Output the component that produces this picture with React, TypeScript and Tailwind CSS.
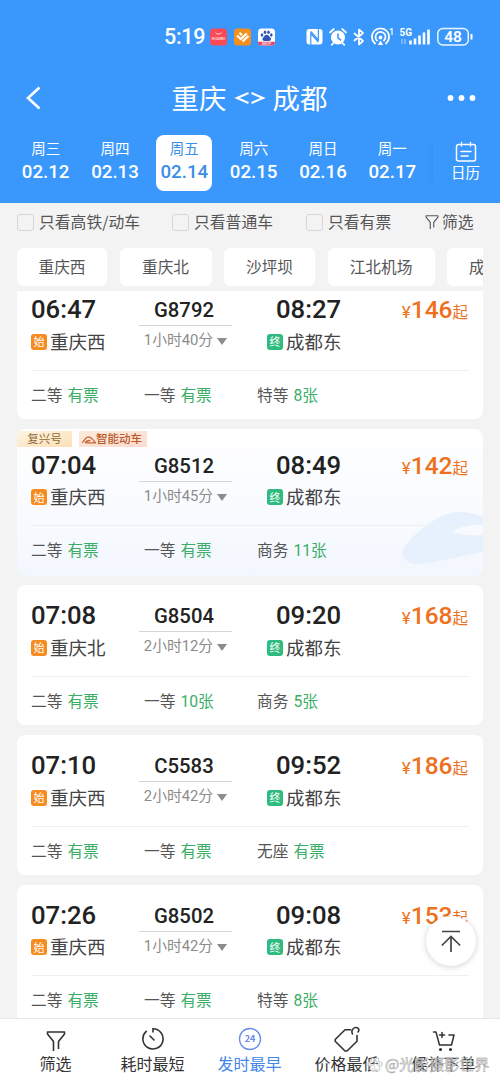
import type { ReactNode } from "react"

type Train = {
  no: string
  depart: string
  arrive: string
  from: string
  to: string
  duration: string
  price: string
  seats: [string, string][]
  smart?: boolean
}

const days = [
  { week: "周三", date: "02.12" },
  { week: "周四", date: "02.13" },
  { week: "周五", date: "02.14", active: true },
  { week: "周六", date: "02.15" },
  { week: "周日", date: "02.16" },
  { week: "周一", date: "02.17" },
]

const stations = [
  { name: "重庆西", width: "w-[90px]" },
  { name: "重庆北", width: "w-[92px]" },
  { name: "沙坪坝", width: "w-[91px]" },
  { name: "江北机场", width: "w-[107px]" },
  { name: "成都东", width: "w-[91px]" },
]

const trains: Train[] = [
  {
    no: "G8792",
    depart: "06:47",
    arrive: "08:27",
    from: "重庆西",
    to: "成都东",
    duration: "1小时40分",
    price: "146",
    seats: [["二等", "有票"], ["一等", "有票"], ["特等", "8张"]],
  },
  {
    no: "G8512",
    depart: "07:04",
    arrive: "08:49",
    from: "重庆西",
    to: "成都东",
    duration: "1小时45分",
    price: "142",
    seats: [["二等", "有票"], ["一等", "有票"], ["商务", "11张"]],
    smart: true,
  },
  {
    no: "G8504",
    depart: "07:08",
    arrive: "09:20",
    from: "重庆北",
    to: "成都东",
    duration: "2小时12分",
    price: "168",
    seats: [["二等", "有票"], ["一等", "10张"], ["商务", "5张"]],
  },
  {
    no: "C5583",
    depart: "07:10",
    arrive: "09:52",
    from: "重庆西",
    to: "成都东",
    duration: "2小时42分",
    price: "186",
    seats: [["二等", "有票"], ["一等", "有票"], ["无座", "有票"]],
  },
  {
    no: "G8502",
    depart: "07:26",
    arrive: "09:08",
    from: "重庆西",
    to: "成都东",
    duration: "1小时42分",
    price: "153",
    seats: [["二等", "有票"], ["一等", "有票"], ["特等", "8张"]],
  },
]

function StatusBar() {
  return (
    <div className="flex h-[74px] items-center pl-[164px] font-[Roboto,sans-serif] text-white">
      <span className="w-[45px] text-[21.500px] leading-none font-medium tracking-[-0.300px]">5:19</span>
      <svg className="h-[18px] w-[66px]" viewBox="0 0 66 18">
        <rect x="1" y="0.5" width="17" height="17" rx="3.5" fill="#fa4a55" />
        <path d="M6.5 4.5a3.2 2.4 0 0 0 6 0" fill="none" stroke="#fff" strokeWidth="0.8" />
        <text x="9.5" y="12" fontSize="3.6" fill="#fff" textAnchor="middle">HUAWEI</text>
        <rect x="25" y="0.5" width="17" height="17" rx="3.5" fill="#f5901f" />
        <path d="M28 7.500l3.800 3.500 6-5.500M30.500 4.800l2.500 2.400M33.500 13.500l6-5.500" fill="none" stroke="#fff" strokeWidth="2.200" />
        <rect x="49" y="0.5" width="17" height="17" rx="3.5" fill="#fff" />
        <g fill="#3155b5">
          <ellipse cx="53" cy="7" rx="1.3" ry="1.8" />
          <ellipse cx="56" cy="4.2" rx="1.3" ry="1.8" />
          <ellipse cx="59.5" cy="4.2" rx="1.3" ry="1.8" />
          <ellipse cx="62.3" cy="7" rx="1.3" ry="1.8" />
          <path d="M57.7 6.8c2 0 2.5 1.8 3.6 2.8 1.6 1.6.4 3.6-1.5 3.4h-4.2c-2 .2-3-1.8-1.4-3.4 1-1 1.6-2.8 3.5-2.8z" />
        </g>
        <path d="M49 13.8h17v.4a3.4 3.4 0 0 1-3.4 3.3H52.4a3.4 3.4 0 0 1-3.4-3.3z" fill="#e24668" />
        <text x="57.5" y="16.8" fontSize="3.4" fill="#fff" textAnchor="middle">88VIP</text>
      </svg>
      <svg className="ml-[31px] h-[24px] w-[168px]" viewBox="306 25 168 24" fill="none" stroke="#fff">
        {/* nfc */}
        <rect x="306.500" y="29" width="16" height="15.600" rx="3" fill="#fff" stroke="none" />
        <path d="M310.800 45V33.500l7.600 8.500M318.400 28.500V40l-7.600-8.500" stroke="#3a97fc" strokeWidth="1.200" />
        {/* alarm */}
        <circle cx="338" cy="37.5" r="7" fill="#fff" stroke="none" />
        <path d="M338 33.5v4.3l3 2.5" stroke="#3a97fc" strokeWidth="1.6" />
        <path d="M330 32.5l3.8-3.5M346 32.5l-3.8-3.5M333.5 43l-1.8 1.8M342.5 43l1.8 1.8" strokeWidth="1.7" strokeLinecap="round" />
        {/* bluetooth */}
        <path d="M354 33l9 8-4 3.5v-15l4 3.5-9 8" strokeWidth="1.7" strokeLinejoin="round" />
        {/* hotspot */}
        <path d="M375 43.5a8.6 8.6 0 1 1 11 0M377 40.5a5 5 0 1 1 7 0" strokeWidth="1.8" strokeLinecap="round" />
        <circle cx="380.5" cy="37.5" r="1.9" fill="#fff" stroke="none" />
        <path d="M377.8 45l2.7-4.5 2.7 4.5z" fill="#fff" stroke="none" />
        <text x="389" y="34.500" fontSize="9" fontWeight="500" fill="#fff" stroke="none">1</text>
        <text x="399.5" y="36" fontSize="10" fontWeight="700" fill="#fff" stroke="none">5G</text>
        <path d="M402 39v5M405 39v5" strokeOpacity="0.5" strokeWidth="1.2" />
        <path d="M410.5 44.5v-4M415 44.5v-6M419.5 44.5v-9M424 44.5v-12M428.5 44.5v-15" strokeWidth="2.6" />
        {/* battery */}
        <rect x="437.8" y="28.5" width="30.5" height="16.5" rx="5" strokeWidth="1.5" strokeOpacity="0.9" />
        <path d="M471.5 34v5.5" strokeWidth="2" />
        <text x="453" y="42.2" fontSize="15.5" fontWeight="600" textAnchor="middle" fill="#fff" stroke="none">48</text>
      </svg>
    </div>
  )
}

function Header() {
  return (
    <header className="h-[203px] bg-[#3a97fc] text-white">
      <StatusBar />
      <div className="flex h-12 items-center justify-between px-6">
        <svg className="h-6 w-7" viewBox="0 0 28 24" fill="none" stroke="#fff" strokeWidth="2.6">
          <path d="M15.5 1.5L4 12l11.5 10.5" />
        </svg>
        <h1 className="flex items-center gap-[7px] text-[27.5px]">
          重庆
          <svg className="h-4 w-8" viewBox="0 0 32 16" fill="none" stroke="#fff" strokeWidth="2.1">
            <path d="M14.5 3L3 8l11.5 5M17.5 3L29 8l-11.5 5" />
          </svg>
          成都
        </h1>
        <svg className="h-2 w-[29px]" viewBox="0 0 29 8" fill="#fff">
          <circle cx="3.5" cy="4" r="2.9" />
          <circle cx="14.5" cy="4" r="2.9" />
          <circle cx="25.5" cy="4" r="2.9" />
        </svg>
      </div>
      <div className="flex h-[81px] items-center pl-[11px]">
        <div className="flex w-[416px]">
          {days.map((day) => (
            <div key={day.date} className="flex flex-1 justify-center">
              <div
                className={
                  day.active
                    ? "flex h-14 w-14 flex-col items-center rounded-lg bg-white pt-[4px] text-[#3b8ee6]"
                    : "flex h-14 w-14 flex-col items-center pt-[4px]"
                }
              >
                <span className="text-[14.5px] leading-[18px]">{day.week}</span>
                <span className="mt-[3px] font-[Roboto,sans-serif] text-[18.7px] leading-6 font-medium">{day.date}</span>
              </div>
            </div>
          ))}
        </div>
        <div className="h-10 w-[6px] bg-linear-to-r from-[#3a97fc] to-[#3692f6]" />
        <div className="-mt-[4px] ml-[18px] flex flex-col items-center text-[14.5px] leading-[18px]">
          <svg className="h-[22px] w-[22px]" viewBox="0 0 22 22" fill="none" stroke="#fff" strokeWidth="1.5" strokeLinecap="round">
            <path d="M5 3.5H3.5a2 2 0 0 0-2 2V18a2 2 0 0 0 2 2h15a2 2 0 0 0 2-2V5.5a2 2 0 0 0-2-2H17M8 3.5h6M6.5 1.5v3.5M15.5 1.5v3.5M6 10.5h10M6 15h7" />
          </svg>
          日历
        </div>
      </div>
    </header>
  )
}

function FunnelIcon({ className }: { className: string }) {
  return (
    <svg className={className} viewBox="0 0 20 22" fill="none" stroke="currentColor" strokeWidth="1.6" strokeLinejoin="round">
      <path d="M7.5 21V11.5L1.5 4V2h17v2l-6 7.5V19" />
    </svg>
  )
}

function Check({ label, className }: { label: string; className: string }) {
  return (
    <label className={`flex items-center gap-[5px] ${className}`}>
      <span className="h-[17px] w-[17px] rounded-[3px] border border-[#d6d6d6]" />
      {label}
    </label>
  )
}

function Tags() {
  return (
    <div className="absolute top-[2px] left-0 flex h-[16px] gap-[7px] text-[11.5px] leading-[15px]">
      <span className="w-[55px] bg-linear-to-br from-[#fdf4e4] to-[#fddfb4] text-center text-[#8d6a35]">复兴号</span>
      <span className="flex w-[68px] items-center bg-linear-to-br from-[#fdeadb] to-[#fcdccf] pl-[3px] font-medium text-[#b95a2b]">
        <svg className="mt-[3px] h-[8px] w-[14px] shrink-0" viewBox="0 0 14 8" fill="none" stroke="#c8622f" strokeWidth="1.2">
          <path d="M0 6.8c2-1 2-3.5 5-5.5 3.5-1 5 1 8.5 5.5H4c-1.5 0 0-2.5 4.5-2.5" />
        </svg>
        智能动车
      </span>
    </div>
  )
}

function Station({ name, badge, color }: { name: string; badge: string; color: string }) {
  return (
    <div className="flex h-[33px] items-center gap-[3px] text-[18.5px] text-[#444]">
      <span className={`flex h-4 w-4 items-center justify-center rounded-[3px] text-[11px] leading-none text-white ${color}`}>
        {badge}
      </span>
      {name}
    </div>
  )
}

function Time({ value, className }: { value: string; className?: string }) {
  return (
    <div className={`h-[32px] font-[Roboto,sans-serif] text-[25.700px] leading-[33px] font-medium text-[#222] ${className ?? ""}`}>
      {value}
    </div>
  )
}

function TrainCard({ train }: { train: Train }) {
  return (
    <article
      className={
        train.smart
          ? "relative h-[147px] shrink-0 overflow-hidden rounded-lg bg-linear-to-b from-white to-[#f3f7fe] px-[14px] pt-[20px]"
          : "relative h-[140px] shrink-0 rounded-lg bg-white px-[14px] pt-[14px]"
      }
    >
      {train.smart && (
        <>
          <Tags />
          <svg className="absolute right-0 bottom-[12px] h-[54px] w-[82px]" viewBox="0 0 82 54" fill="#e7f0fd">
            <path d="M1 42C4 34 13 25 22 18 33 9 46 2 58 2c9 0 17 2 24 5v8c-12-1-24 2-31 7 8 3 20 4 31 3v17c-14 3-30 6-45 9-9 2-16 4-25 3C7 53 0 46 1 42z" />
          </svg>
        </>
      )}
      <div className="relative flex h-[77.500px] border-b border-[#eeeff1]">
        <div className="w-[108px]">
          <Time value={train.depart} />
          <Station name={train.from} badge="始" color="bg-[#f68b1f]" />
        </div>
        <div className="flex w-[93px] flex-col items-center">
          <div className="h-[33px] w-full border-b border-[#d5d5d5] pt-px pr-[3px] text-center font-[Roboto,sans-serif] text-[20.3px] leading-[32px] font-medium text-[#222]">
            {train.no}
          </div>
          <div className="flex items-center gap-[4px] font-[Roboto,'Noto_Sans_CJK_SC',sans-serif] text-[14.8px] leading-[29px] text-[#8c8c8c]">
            {train.duration}
            <span className="mt-[2px] border-x-[5px] border-t-[7px] border-x-transparent border-t-[#8c8c8c]" />
          </div>
        </div>
        <div className="ml-[35px]">
          <Time value={train.arrive} className="pl-[9px]" />
          <Station name={train.to} badge="终" color="bg-[#2fbb80]" />
        </div>
        <div className="ml-auto flex h-[32px] items-baseline pr-px font-[Roboto,sans-serif] text-[24.5px] leading-[33px] font-medium text-[#ee711e]">
          <span className="text-[17px] font-normal">¥</span>
          {train.price}
          <span className="font-['Noto_Sans_CJK_SC',sans-serif] text-[15.5px] font-normal">起</span>
        </div>
      </div>
      <div className="relative flex h-[48px] items-center pt-[2px] font-[Roboto,'Noto_Sans_CJK_SC',sans-serif] text-[15.7px] text-[#555]">
        {train.seats.map(([kind, left]) => (
          <div key={kind} className="flex w-[113px] gap-[5px]">
            {kind}
            <span className="text-[#3aae67]">{left}</span>
          </div>
        ))}
      </div>
    </article>
  )
}

function NavItem({ label, active, children }: { label: string; active?: boolean; children: ReactNode }) {
  return (
    <div className={active ? "flex w-[97px] flex-col items-center text-[#4388e8]" : "flex w-[97px] flex-col items-center text-[#333]"}>
      <span className="flex h-[26px] items-center">{children}</span>
      <span className="text-[16px] leading-[22px] whitespace-nowrap">{label}</span>
    </div>
  )
}

function BottomNav() {
  return (
    <nav className="flex h-[65px] shrink-0 border-t border-[#e6e6e6] bg-white pt-[7px] pl-[7px]">
      <NavItem label="筛选">
        <FunnelIcon className="mt-[3px] h-[22px] w-[20px]" />
      </NavItem>
      <NavItem label="耗时最短">
        <svg className="h-[24px] w-[24px]" viewBox="0 0 24 24" fill="none" stroke="currentColor" strokeWidth="1.6" strokeLinecap="round">
          <path d="M12 5V1.8a10.1 10.1 0 1 1-6.8 2.6M9 9l4 4" />
        </svg>
      </NavItem>
      <NavItem label="发时最早" active>
        <svg className="h-[24px] w-[24px]" viewBox="0 0 24 24">
          <circle cx="12" cy="12" r="10.5" fill="none" stroke="#668be8" strokeWidth="1.3" />
          <text x="12" y="15.3" fontSize="9" fontWeight="700" textAnchor="middle" fill="#668be8">24</text>
        </svg>
      </NavItem>
      <NavItem label="价格最低">
        <svg className="h-[26px] w-[26px]" viewBox="0 0 26 26" fill="none" stroke="currentColor" strokeWidth="1.6" strokeLinecap="round" strokeLinejoin="round">
          <path d="M18.500 8c-1.500-3 0-6 3-6.500 3.200-.300 4.200 2.700 2.500 4.500M16.500 3.800H11L1.200 13.500v1.800l9.800 9.700h2l10-9.800V9.500" />
        </svg>
      </NavItem>
      <NavItem label="候补下单">
        <svg className="mt-[3px] h-[22px] w-[24px]" viewBox="0 0 24 22" fill="none" stroke="currentColor" strokeWidth="1.5" strokeLinecap="round" strokeLinejoin="round">
          <path d="M1.5 2H4l3.5 13h12L22 5h-5M10 2.500v5M7.500 5h5" />
          <circle cx="8.5" cy="19.5" r="0.8" fill="currentColor" />
          <circle cx="18.5" cy="19.5" r="0.8" fill="currentColor" />
        </svg>
      </NavItem>
    </nav>
  )
}

export default function App() {
  return (
    <div className="relative flex h-[1083px] w-[500px] flex-col overflow-hidden bg-[#f3f3f3] font-['Noto_Sans_CJK_SC',sans-serif]">
      <Header />
      <div className="flex h-[38px] shrink-0 items-center pl-[17px] text-[15.8px] text-[#555]">
        <Check label="只看高铁/动车" className="w-[155px]" />
        <Check label="只看普通车" className="w-[134px]" />
        <Check label="只看有票" className="w-[119px]" />
        <FunnelIcon className="mr-[3px] h-[16px] w-[14px]" />
        筛选
      </div>
      <div className="mx-[17px] mt-[7px] flex h-[38px] shrink-0 gap-[12.5px] overflow-hidden text-[15.7px] text-[#555]">
        {stations.map((s) => (
          <div key={s.name} className={`flex shrink-0 items-center justify-center rounded-md bg-white ${s.width}`}>
            {s.name}
          </div>
        ))}
      </div>
      <main className="mt-[5px] flex min-h-0 flex-1 flex-col overflow-hidden px-[17px]">
        <div className="-mt-[12px] flex flex-col gap-[9.7px]">
          {trains.map((train) => (
            <TrainCard key={train.no} train={train} />
          ))}
        </div>
      </main>
      <BottomNav />

      <button className="absolute top-[916px] left-[426px] flex h-[50px] w-[50px] items-center justify-center rounded-full bg-white shadow-[0_1px_6px_rgba(0,0,0,0.18)]">
        <svg className="h-[24px] w-[20px]" viewBox="0 0 20 24" fill="none" stroke="#444" strokeWidth="1.7">
          <path d="M1 2.5h18M10 23V8M0.8 16.5L10 7.5l9.2 9" />
        </svg>
      </button>

      {/* watermark */}
      <div className="absolute top-[1054px] left-[367px] flex items-center text-[15px] leading-[20px] whitespace-nowrap text-white/70 [-webkit-text-stroke:0.5px_#999999]">
        <svg className="mr-[2px] h-[15px] w-[16px]" viewBox="0 0 16 15" fill="#fffc" stroke="#aaa" strokeWidth="0.7">
          <ellipse cx="2.5" cy="7" rx="1.6" ry="2.2" />
          <ellipse cx="5.8" cy="3" rx="1.6" ry="2.2" />
          <ellipse cx="10.2" cy="3" rx="1.6" ry="2.2" />
          <ellipse cx="13.5" cy="7" rx="1.6" ry="2.2" />
          <path d="M8 6.5c2 0 2.5 2 4 3.3 2 2 .5 4.500-1.500 4.200h-5C3.500 14.300 2 11.800 4 9.800 5.500 8.500 6 6.500 8 6.500z" />
        </svg>
        @光影摄影世界
      </div>
    </div>
  )
}
